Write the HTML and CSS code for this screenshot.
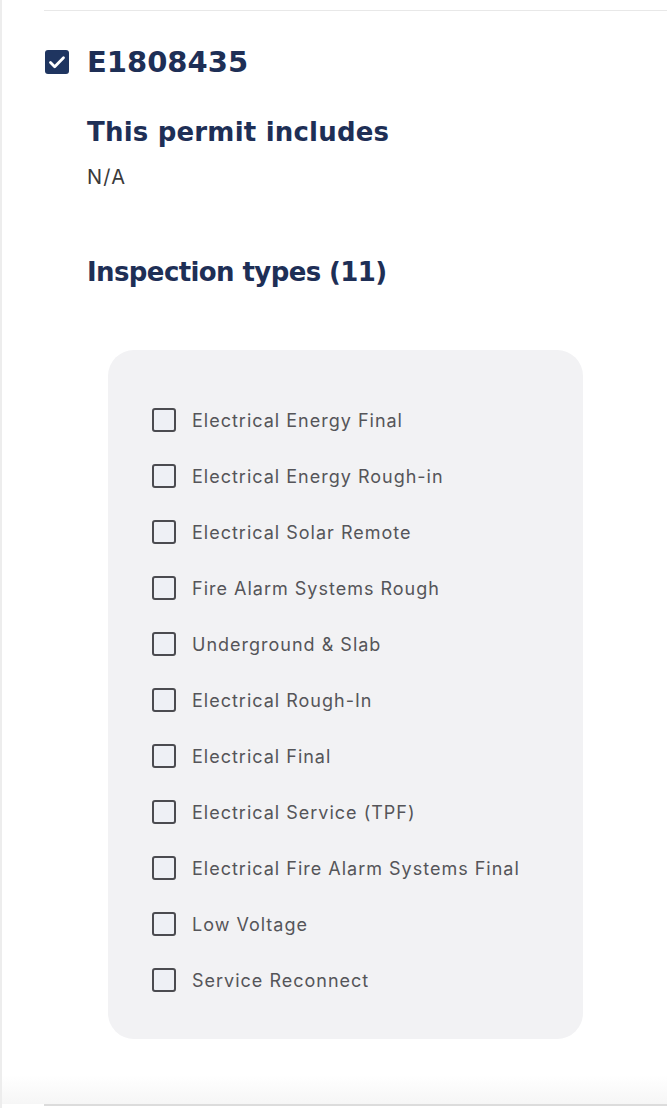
FILE: index.html
```html
<!DOCTYPE html>
<html lang="en">

<head>
    <meta charset="UTF-8" />
    <meta name="viewport" content="width=device-width, initial-scale=1.0" />
    <title>Permit E1808435</title>
    <link rel="stylesheet" href="styles.css">
</head>

<body>
    <div class="page">
        <div class="rule-top"></div>

        <div class="permit">
            <!-- 许可证标题 -->
            <div class="permit-head">
                <span class="check checked">
                    <svg viewBox="0 0 24 24" width="24" height="24">
                        <path d="M5.5 12.5l4.2 4.2L18.5 7.8" fill="none" stroke="#fff" stroke-width="2.8"
                            stroke-linecap="round" stroke-linejoin="round" />
                    </svg>
                </span>
                <h1 class="permit-no">E1808435</h1>
            </div>

            <div class="permit-body">
                <h2 class="sub-title">This permit includes</h2>
                <p class="includes">N/A</p>

                <h2 class="sub-title types-title">Inspection types (11)</h2>

                <ul class="types">
                    <li><span class="check"></span>Electrical Energy Final</li>
                    <li><span class="check"></span>Electrical Energy Rough-in</li>
                    <li><span class="check"></span>Electrical Solar Remote</li>
                    <li><span class="check"></span>Fire Alarm Systems Rough</li>
                    <li><span class="check"></span>Underground &amp; Slab</li>
                    <li><span class="check"></span>Electrical Rough-In</li>
                    <li><span class="check"></span>Electrical Final</li>
                    <li><span class="check"></span>Electrical Service (TPF)</li>
                    <li><span class="check"></span>Electrical Fire Alarm Systems Final</li>
                    <li><span class="check"></span>Low Voltage</li>
                    <li><span class="check"></span>Service Reconnect</li>
                </ul>
            </div>
        </div>

        <div class="bottom-shade"></div>
        <div class="rule-bottom"></div>
    </div>
</body>

</html>
```

FILE: styles.css
```css
* {
    margin: 0;
    padding: 0;
    box-sizing: border-box;
}

ul {
    list-style: none;
}

body {
    background: #fff;
    font-family: Inter, "Noto Sans", sans-serif;
    color: #1e2f56;
}

.page {
    width: 667px;
    height: 1108px;
    border-left: 2px solid #ededed;
    overflow: hidden;
}

.rule-top {
    margin-left: 42px;
    height: 11px;
    border-bottom: 1px solid #e8e8e8;
}

.permit {
    padding-left: 43px;
}

.permit-head {
    display: flex;
    align-items: center;
    gap: 18px;
    height: 40px;
    margin-top: 31px;
}

.check {
    width: 24px;
    height: 24px;
    flex: none;
    border: 2px solid #4b4b50;
    border-radius: 3px;
    background: #eef0f5;
    display: flex;
    align-items: center;
    justify-content: center;
}

.check.checked {
    border: none;
    background: #1f3560;
}

.permit-no {
    font-family: "DejaVu Sans", Inter, sans-serif;
    font-size: 29px;
    font-weight: 700;
}

.permit-body {
    padding-left: 42px;
}

.sub-title {
    font-family: "DejaVu Sans", Inter, sans-serif;
    font-size: 26px;
    font-weight: 700;
    line-height: 32px;
    margin-top: 34px;
    letter-spacing: 0.2px;
}

.includes {
    margin-top: 16px;
    font-size: 20px;
    line-height: 26px;
    color: #3a3a3a;
    letter-spacing: 1.2px;
}

.types-title {
    margin-top: 66px;
    letter-spacing: -0.6px;
}

.types {
    margin: 62px 0 0 21px;
    width: 475px;
    height: 689px;
    padding: 42px 0 0 44px;
    background: #f2f2f4;
    border-radius: 26px;
}

.types li {
    height: 56px;
    display: flex;
    align-items: center;
    gap: 16px;
    font-size: 18px;
    color: #555559;
    letter-spacing: 1px;
}

.bottom-shade {
    margin-top: 36px;
    height: 29px;
    background: linear-gradient(#fff, #f6f6f6);
}

.rule-bottom {
    margin-left: 42px;
    height: 3px;
    border-top: 2px solid #dcdcdc;
    background: #fff;
}
```
